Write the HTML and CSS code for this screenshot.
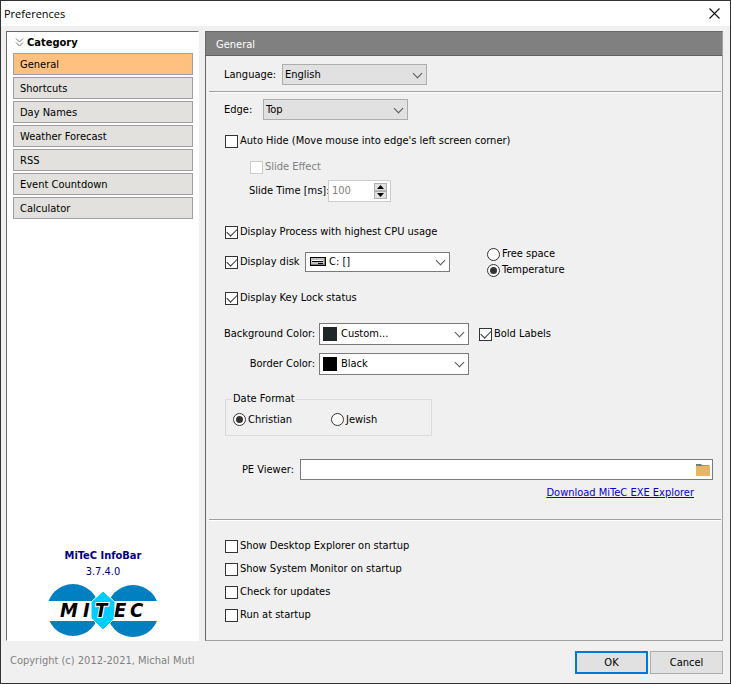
FILE: index.html
```html
<!DOCTYPE html>
<html lang="en">
<head>
  <meta charset="UTF-8">
  <meta name="viewport" content="width=device-width, initial-scale=1.0">
  <title>Preferences</title>
  <link rel="stylesheet" href="styles.css">
</head>
<body>
  <div class="window">
    <!-- Title bar -->
    <header class="titlebar">
      <h1>Preferences</h1>
      <button class="close-btn" aria-label="Close">
        <svg width="11" height="11" viewBox="0 0 11 11"><path d="M.5 .5L10.500 10.500M10.500 .5L.5 10.500" stroke="#111" stroke-width="1.100"/></svg>
      </button>
    </header>

    <div class="main">
      <!-- Category list -->
      <nav class="sidebar">
        <h2 class="sidebar-title">
          <svg width="9" height="9" viewBox="0 0 9 9" fill="none" stroke="#777" stroke-width="1"><path d="M1 .5L4.500 4L8 .5M1 4.500L4.500 8L8 4.500"/></svg>
          Category
        </h2>
        <button class="category active">General</button>
        <button class="category">Shortcuts</button>
        <button class="category">Day Names</button>
        <button class="category">Weather Forecast</button>
        <button class="category">RSS</button>
        <button class="category">Event Countdown</button>
        <button class="category">Calculator</button>

        <div class="about">
          <strong>MiTeC InfoBar</strong>
          <span>3.7.4.0</span>
          <svg class="logo" width="110" height="54" viewBox="0 0 110 54">
            <circle cx="25" cy="26" r="26" fill="#0080c0"/>
            <circle cx="85" cy="27" r="26" fill="#0080c0"/>
            <rect x="-2" y="17" width="114" height="20" fill="#fff"/>
            <path d="M55 7L67 18V34L55 46L43 34V18Z" fill="#0cf" stroke="#fff" stroke-width="1"/>
            <text class="logo-text" x="12 35 47 66 82" y="33">MITEC</text>
          </svg>
        </div>
      </nav>

      <!-- General page -->
      <main class="panel">
        <h2 class="panel-title">General</h2>

        <div class="row row-language">
          <label for="language">Language:</label>
          <span class="select gray"><select id="language"><option>English</option></select></span>
        </div>
        <hr>

        <div class="row row-edge">
          <label for="edge">Edge:</label>
          <span class="select gray"><select id="edge"><option>Top</option></select></span>
        </div>
        <div class="row row-autohide">
          <label class="check"><input type="checkbox">Auto Hide (Move mouse into edge's left screen corner)</label>
        </div>
        <div class="row row-effect">
          <label class="check disabled"><input type="checkbox" disabled>Slide Effect</label>
        </div>
        <div class="row row-time">
          <label for="slide-time">Slide Time [ms]:</label>
          <span class="spinner">
            <input type="text" id="slide-time" value="100" disabled>
            <span class="spin-buttons">
              <button class="spin" aria-label="Increase" disabled><svg width="7" height="4" viewBox="0 0 7 4"><path d="M0 4L3.500 0L7 4Z"/></svg></button>
              <button class="spin" aria-label="Decrease" disabled><svg width="7" height="4" viewBox="0 0 7 4"><path d="M0 0L3.500 4L7 0Z"/></svg></button>
            </span>
          </span>
        </div>

        <div class="row row-process">
          <label class="check"><input type="checkbox" checked>Display Process with highest CPU usage</label>
        </div>
        <div class="row row-disk">
          <label class="check"><input type="checkbox" checked>Display disk</label>
          <span class="select disk">
            <svg class="drive" width="16" height="9" viewBox="0 0 16 9"><path d="M0 0H16V9H0Z"/><path d="M1 1H14V7H1Z" fill="#c0c0c0"/><path d="M14 1H15V8H1V7H14Z" fill="#808080"/><path d="M2 3H13V4H2Z" fill="#fff"/><path d="M2 4H13V5H2ZM8 6H13V7H8Z"/></svg>
            <select aria-label="Disk"><option>C: []</option></select>
          </span>
          <div class="disk-mode">
            <label class="check"><input type="radio" name="disk-mode">Free space</label>
            <label class="check"><input type="radio" name="disk-mode" checked>Temperature</label>
          </div>
        </div>
        <div class="row row-keylock">
          <label class="check"><input type="checkbox" checked>Display Key Lock status</label>
        </div>

        <div class="row row-background">
          <label for="background">Background Color:</label>
          <span class="select color"><span class="swatch custom"></span><select id="background"><option>Custom...</option></select></span>
          <label class="check"><input type="checkbox" checked>Bold Labels</label>
        </div>
        <div class="row row-border">
          <label for="border">Border Color:</label>
          <span class="select color"><span class="swatch black"></span><select id="border"><option>Black</option></select></span>
        </div>

        <fieldset class="date-format">
          <legend>Date Format</legend>
          <label class="check"><input type="radio" name="date-format" checked>Christian</label>
          <label class="check"><input type="radio" name="date-format">Jewish</label>
        </fieldset>

        <div class="row row-viewer">
          <label for="viewer">PE Viewer:</label>
          <span class="path">
            <input type="text" id="viewer">
            <button class="browse" aria-label="Browse"><svg width="14" height="12" viewBox="0 0 14 12"><path d="M0 0H5L6 1H13V4H0Z" fill="#6f7d72"/><path d="M0 2H6L7 1.500H14V12H0Z" fill="#e8b565"/></svg></button>
          </span>
        </div>
        <div class="row row-link">
          <a href="#">Download MiTeC EXE Explorer</a>
        </div>
        <hr>

        <div class="startup">
          <label class="check"><input type="checkbox">Show Desktop Explorer on startup</label>
          <label class="check"><input type="checkbox">Show System Monitor on startup</label>
          <label class="check"><input type="checkbox">Check for updates</label>
          <label class="check"><input type="checkbox">Run at startup</label>
        </div>
      </main>
    </div>

    <!-- Footer -->
    <footer class="footer">
      <span class="copyright">Copyright (c) 2012-2021, Michal Mutl</span>
      <button class="btn default">OK</button>
      <button class="btn">Cancel</button>
    </footer>
  </div>
</body>
</html>
```
FILE: styles.css
```css
* {
  box-sizing: border-box;
}
body {
  margin: 0;
  font-family: "DejaVu Sans Condensed", "Noto Sans", sans-serif;
  font-size: 11px;
  line-height: 16px;
  color: #000;
}
input, select, button {
  font: inherit;
  color: inherit;
  margin: 0;
}
h1, h2 {
  margin: 0;
  font-size: 11px;
  font-weight: normal;
}
.window {
  display: flex;
  flex-direction: column;
  min-height: 100vh;
  background: #f0f0f0;
  border: 1px solid #333;
}

/* Title bar */
.titlebar {
  display: flex;
  align-items: center;
  justify-content: space-between;
  height: 25px;
  padding: 0 10px 0 3px;
  background: #fff;
}
.titlebar h1 {
  font-family: "Open Sans", sans-serif;
}
.close-btn {
  display: flex;
  padding: 0;
  border: none;
  background: none;
}

/* Columns */
.main {
  display: flex;
  flex: 1;
  gap: 6px;
  padding: 5px 7px 0 5px;
}
.sidebar, .panel {
  border: 1px solid;
  border-color: #696969 #fff #fff #696969;
}
.sidebar {
  display: flex;
  flex-direction: column;
  width: 193px;
  padding: 1px 5px 2px 6px;
  background: #fff;
}
.sidebar-title {
  display: flex;
  align-items: center;
  gap: 3px;
  height: 18px;
  margin-bottom: 2px;
  padding: 1px 0 0 2px;
  font-weight: bold;
}
.category {
  height: 22px;
  margin-bottom: 2px;
  padding: 1px 6px 0;
  border: 1px solid #a0a0a4;
  background: #e2e1dd;
  text-align: left;
}
.category.active {
  background: #ffc080;
}
.about {
  display: flex;
  flex-direction: column;
  align-items: center;
  margin-top: auto;
  color: #000080;
}
.logo {
  margin-top: 4px;
}
.logo-text {
  font: italic bold 20px "DejaVu Sans Condensed", sans-serif;
  fill: #000;
  stroke: #fff;
  stroke-width: 2px;
  paint-order: stroke;
}

/* Panel */
.panel {
  flex: 1;
  min-width: 0;
  border-color: #696969 #a0a0a0 #a0a0a0 #696969;
}
.panel-title {
  height: 24px;
  padding: 5px 10px 2px;
  border-bottom: 1px solid #606060;
  background: #808080;
  color: #fff;
}
hr {
  margin: 0 1px 0 3px;
  border: none;
  border-top: 1px solid #a0a0a0;
  border-bottom: 1px solid #fff;
}
.row {
  display: flex;
  align-items: center;
  padding: 0 9px 0 18px;
  white-space: nowrap;
}
.row-language {
  margin: 8px 0 6px;
}
.row-language > label {
  width: 58px;
}
.row-edge {
  margin-top: 6px;
}
.row-edge > label {
  width: 39px;
}
.row-autohide {
  margin-top: 13px;
}
.row-effect {
  margin-top: 10px;
  padding-left: 43px;
}
.row-time {
  margin-top: 5px;
  padding-left: 43px;
}
.row-time > label {
  width: 79px;
}
.row-process {
  margin-top: 22px;
}
.row-disk {
  margin-top: 6px;
}
.row-disk > .check {
  width: 81px;
}
.disk-mode {
  display: flex;
  flex-direction: column;
  margin-left: 36px;
}
.row-keylock {
  margin-top: 12px;
}
.row-background {
  margin-top: 17px;
}
.row-border {
  margin-top: 8px;
}
.row-background > label:first-child, .row-border > label {
  width: 91px;
  margin-right: 4px;
  text-align: right;
}
.row-background > .check {
  margin-left: 9px;
}
.row-viewer {
  margin-top: 23px;
}
.row-viewer > label {
  width: 70px;
  margin-right: 6px;
  text-align: right;
}
.row-link {
  justify-content: flex-end;
  margin: 5px 0 18px;
  padding-right: 28px;
}
.row-link a {
  color: #0000c8;
}

/* Check boxes and radios */
.check {
  display: flex;
  align-items: center;
  gap: 2px;
  padding-left: 1px;
  white-space: nowrap;
}
.check input {
  display: flex;
  flex: none;
  width: 13px;
  height: 13px;
  appearance: none;
  border: 1px solid #333;
  background: #fff;
}
.check input[type="radio"] {
  align-items: center;
  justify-content: center;
  border-radius: 50%;
}
.check input[type="checkbox"]:checked::after {
  content: "";
  width: 9px;
  height: 5px;
  margin: 2px 0 0 1px;
  border: solid #333;
  border-width: 0 0 1px 1px;
  transform: translateY(-1px) rotate(-45deg);
}
.check input[type="radio"]:checked::after {
  content: "";
  width: 7px;
  height: 7px;
  border-radius: 50%;
  background: #333;
}
.check.disabled {
  color: #808080;
}
.check.disabled input {
  border-color: #ccc;
}

/* Drop-downs */
.select {
  position: relative;
  width: 145px;
}
.select select {
  display: block;
  width: 100%;
  height: 21px;
  padding: 0 18px 0 2px;
  appearance: none;
  border: 1px solid #7a7a7a;
  border-radius: 0;
  background: #fff;
}
.select::after {
  content: "";
  position: absolute;
  top: 50%;
  right: 6px;
  width: 6px;
  height: 6px;
  margin-top: -5px;
  border: solid #555;
  border-width: 0 1px 1px 0;
  transform: rotate(45deg);
  pointer-events: none;
}
.select.gray select {
  border-color: #adadad;
  background: #e1e1e1;
}
.select.disk select {
  height: 20px;
  padding-left: 23px;
}
.select.color {
  width: 150px;
}
.select.color select {
  height: 22px;
  padding-left: 21px;
}
.drive {
  position: absolute;
  top: 5px;
  left: 5px;
}
.swatch {
  position: absolute;
  top: 4px;
  left: 4px;
  width: 14px;
  height: 14px;
  background: #000;
}
.swatch.custom {
  background: #202628;
}

/* Text boxes */
.spinner {
  display: flex;
  width: 63px;
  height: 22px;
  padding: 2px 3px;
  border: 1px solid #ccc;
  background: #fff;
}
.spinner input {
  flex: 1;
  min-width: 0;
  padding: 0;
  border: none;
  background: none;
  color: #808080;
}
.spin-buttons {
  display: flex;
  flex-direction: column;
  width: 13px;
}
.spin {
  display: flex;
  flex: 1;
  align-items: center;
  justify-content: center;
  padding: 0;
  border: 1px solid #b0b0b0;
  background: #e1e1e1;
}
.path {
  display: flex;
  flex: 1;
  height: 21px;
  border: 1px solid #7a7a7a;
  background: #fff;
}
.path input {
  flex: 1;
  min-width: 0;
  border: none;
  background: none;
}
.browse {
  display: flex;
  align-items: center;
  padding: 0 2px;
  border: none;
  background: none;
}

/* Date format group */
.date-format {
  display: flex;
  width: 207px;
  height: 44px;
  margin: 17px 0 0 19px;
  padding: 5px 0 7px 6px;
  border: 1px solid #dcdcdc;
}
.date-format legend {
  padding: 0 1px;
  line-height: 14px;
}
.date-format .check {
  width: 98px;
}

.startup {
  display: flex;
  flex-direction: column;
  gap: 7px;
  padding: 17px 18px;
}

/* Footer */
.footer {
  display: flex;
  gap: 2px;
  padding: 10px 7px 9px 9px;
}
.copyright {
  margin-right: auto;
  padding-top: 2px;
  color: #808080;
}
.btn {
  width: 73px;
  height: 23px;
  padding: 0;
  border: 1px solid #adadad;
  background: #e1e1e1;
}
.btn.default {
  border: 2px solid #0078d7;
}
```
